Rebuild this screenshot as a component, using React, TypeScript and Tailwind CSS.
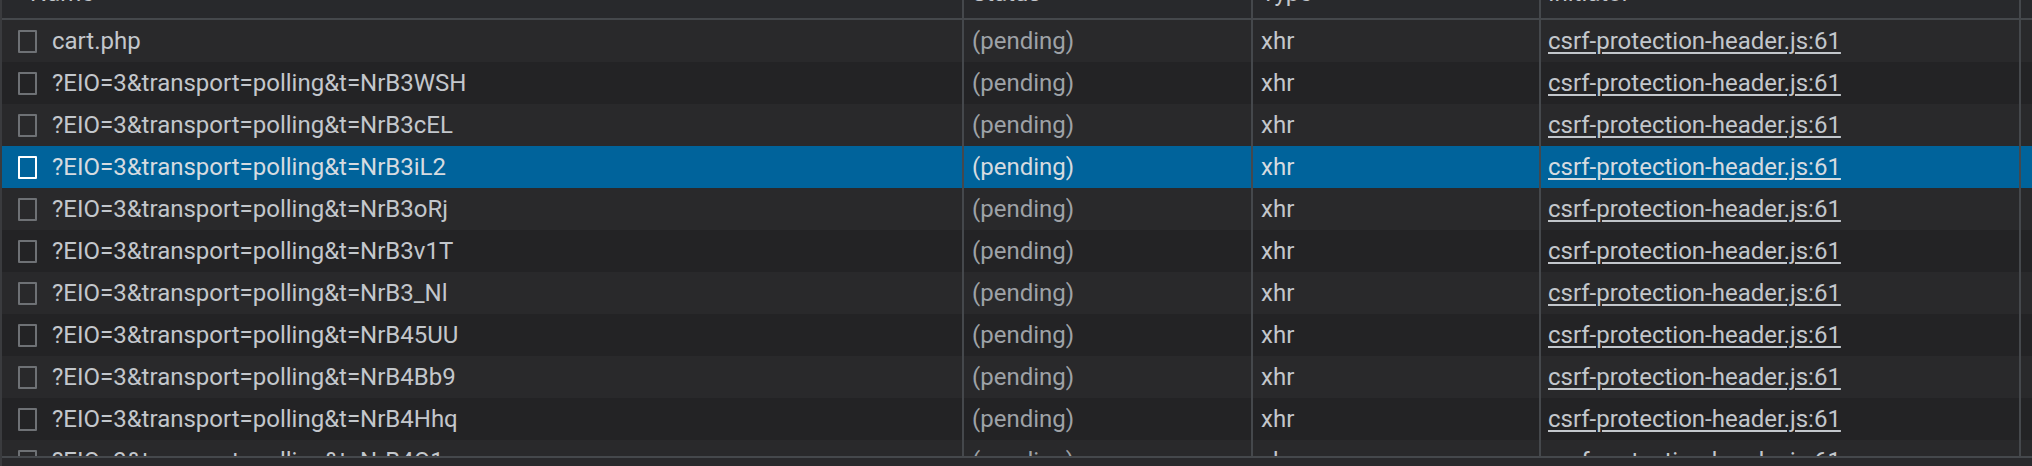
const rows = [
  "cart.php",
  "?EIO=3&transport=polling&t=NrB3WSH",
  "?EIO=3&transport=polling&t=NrB3cEL",
  "?EIO=3&transport=polling&t=NrB3iL2",
  "?EIO=3&transport=polling&t=NrB3oRj",
  "?EIO=3&transport=polling&t=NrB3v1T",
  "?EIO=3&transport=polling&t=NrB3_Nl",
  "?EIO=3&transport=polling&t=NrB45UU",
  "?EIO=3&transport=polling&t=NrB4Bb9",
  "?EIO=3&transport=polling&t=NrB4Hhq",
  "?EIO=3&transport=polling&t=NrB4O1a",
];

const SELECTED = 3;

function Row({ name, index }: { name: string; index: number }) {
  const selected = index === SELECTED;
  const bg = selected ? "bg-[#00639b]" : index % 2 === 0 ? "bg-[#29292b]" : "bg-[#232325]";
  const text = selected ? "text-[#d6dbe0]" : "text-[#c3c7cc]";
  const dim = selected ? "text-[#d6dbe0]" : "text-[#9ea2a7]";

  return (
    <div className={`grid h-[42px] shrink-0 grid-cols-[960px_289px_288px_480px_1fr] ${bg}`}>
      <div className="flex items-center gap-[15px] pl-[16px]">
        <span
          className={`h-[23px] w-[19px] shrink-0 rounded-[1px] border-2 ${
            selected ? "border-white" : "border-[#6e7175]"
          }`}
        />
        <span className={`whitespace-nowrap ${text}`}>{name}</span>
      </div>
      <div className={`flex items-center border-l-2 border-[#45484c] pl-[8px] ${dim}`}>(pending)</div>
      <div className={`flex items-center border-l-2 border-[#45484c] pl-[8px] ${text}`}>xhr</div>
      <div className={`flex items-center border-l-2 border-[#45484c] pl-[7px] ${text}`}>
        <span className="underline decoration-[1.5px] underline-offset-[3px]">csrf-protection-header.js:61</span>
      </div>
      <div className="border-l-2 border-[#45484c]" />
    </div>
  );
}

export default function App() {
  return (
    <div className="flex h-[466px] w-[2032px] flex-col overflow-hidden border-l-2 border-[#3a3b3e] bg-[#29292c] font-['Roboto',sans-serif] text-[24px] leading-none">
      {/* Header, scrolled so only the bottom edge shows */}
      <div className="grid h-[20px] shrink-0 grid-cols-[960px_289px_288px_480px_1fr] overflow-hidden border-b-2 border-[#45484c] bg-[#28292c] text-[#c3c7cc]">
        <div className="pl-[28px]">
          <div className="-mt-[28px] leading-[42px]">Name</div>
        </div>
        <div className="border-l-2 border-[#45484c] pl-[8px]">
          <div className="-mt-[28px] leading-[42px]">Status</div>
        </div>
        <div className="border-l-2 border-[#45484c] pl-[8px]">
          <div className="-mt-[28px] leading-[42px]">Type</div>
        </div>
        <div className="border-l-2 border-[#45484c] pl-[7px]">
          <div className="-mt-[28px] leading-[42px]">Initiator</div>
        </div>
        <div className="border-l-2 border-[#45484c]" />
      </div>

      {/* Request rows */}
      <div className="flex h-[436px] shrink-0 flex-col overflow-hidden">
        {rows.map((name, i) => (
          <Row key={name} name={name} index={i} />
        ))}
      </div>

      {/* Summary bar edge */}
      <div className="flex-1 border-t-2 border-[#45484c] bg-[#29292c]" />
    </div>
  );
}
